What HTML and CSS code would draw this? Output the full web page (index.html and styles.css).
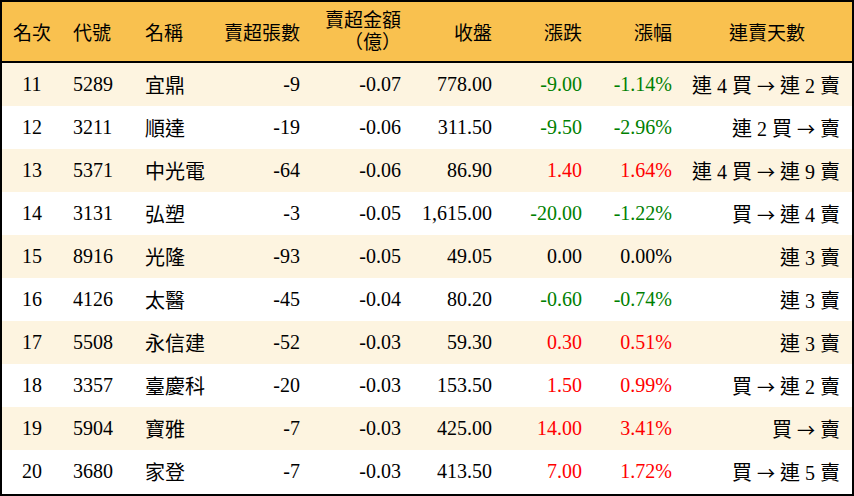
FILE: index.html
```html
<!DOCTYPE html>
<html lang="zh-Hant">
<head>
<meta charset="utf-8">
<link rel="stylesheet" href="styles.css">
</head>
<body>
<div class="board">
  <div class="row head">
    <div class="c center">名次</div>
    <div class="c left">代號</div>
    <div class="c left">名稱</div>
    <div class="c right">賣超張數</div>
    <div class="c right two">賣超金額<br>（億）</div>
    <div class="c right">收盤</div>
    <div class="c right">漲跌</div>
    <div class="c right">漲幅</div>
    <div class="c center streak-h">連賣天數</div>
  </div>
  <div class="row odd">
    <div class="c center">11</div><div class="c left">5289</div><div class="c left">宜鼎</div>
    <div class="c right">-9</div><div class="c right">-0.07</div><div class="c right">778.00</div>
    <div class="c right dn">-9.00</div><div class="c right dn">-1.14%</div>
    <div class="c right streak">連 4 買 <span class="arr">→</span> 連 2 賣</div>
  </div>
  <div class="row">
    <div class="c center">12</div><div class="c left">3211</div><div class="c left">順達</div>
    <div class="c right">-19</div><div class="c right">-0.06</div><div class="c right">311.50</div>
    <div class="c right dn">-9.50</div><div class="c right dn">-2.96%</div>
    <div class="c right streak">連 2 買 <span class="arr">→</span> 賣</div>
  </div>
  <div class="row odd">
    <div class="c center">13</div><div class="c left">5371</div><div class="c left">中光電</div>
    <div class="c right">-64</div><div class="c right">-0.06</div><div class="c right">86.90</div>
    <div class="c right up">1.40</div><div class="c right up">1.64%</div>
    <div class="c right streak">連 4 買 <span class="arr">→</span> 連 9 賣</div>
  </div>
  <div class="row">
    <div class="c center">14</div><div class="c left">3131</div><div class="c left">弘塑</div>
    <div class="c right">-3</div><div class="c right">-0.05</div><div class="c right">1,615.00</div>
    <div class="c right dn">-20.00</div><div class="c right dn">-1.22%</div>
    <div class="c right streak">買 <span class="arr">→</span> 連 4 賣</div>
  </div>
  <div class="row odd">
    <div class="c center">15</div><div class="c left">8916</div><div class="c left">光隆</div>
    <div class="c right">-93</div><div class="c right">-0.05</div><div class="c right">49.05</div>
    <div class="c right">0.00</div><div class="c right">0.00%</div>
    <div class="c right streak">連 3 賣</div>
  </div>
  <div class="row">
    <div class="c center">16</div><div class="c left">4126</div><div class="c left">太醫</div>
    <div class="c right">-45</div><div class="c right">-0.04</div><div class="c right">80.20</div>
    <div class="c right dn">-0.60</div><div class="c right dn">-0.74%</div>
    <div class="c right streak">連 3 賣</div>
  </div>
  <div class="row odd">
    <div class="c center">17</div><div class="c left">5508</div><div class="c left">永信建</div>
    <div class="c right">-52</div><div class="c right">-0.03</div><div class="c right">59.30</div>
    <div class="c right up">0.30</div><div class="c right up">0.51%</div>
    <div class="c right streak">連 3 賣</div>
  </div>
  <div class="row">
    <div class="c center">18</div><div class="c left">3357</div><div class="c left">臺慶科</div>
    <div class="c right">-20</div><div class="c right">-0.03</div><div class="c right">153.50</div>
    <div class="c right up">1.50</div><div class="c right up">0.99%</div>
    <div class="c right streak">買 <span class="arr">→</span> 連 2 賣</div>
  </div>
  <div class="row odd">
    <div class="c center">19</div><div class="c left">5904</div><div class="c left">寶雅</div>
    <div class="c right">-7</div><div class="c right">-0.03</div><div class="c right">425.00</div>
    <div class="c right up">14.00</div><div class="c right up">3.41%</div>
    <div class="c right streak">買 <span class="arr">→</span> 賣</div>
  </div>
  <div class="row">
    <div class="c center">20</div><div class="c left">3680</div><div class="c left">家登</div>
    <div class="c right">-7</div><div class="c right">-0.03</div><div class="c right">413.50</div>
    <div class="c right up">7.00</div><div class="c right up">1.72%</div>
    <div class="c right streak">買 <span class="arr">→</span> 連 5 賣</div>
  </div>
</div>
</body>
</html>
```
FILE: styles.css
```css
html, body {
  margin: 0;
  padding: 0;
  background: #fff;
}
body {
  font-family: "Liberation Serif", "Noto Sans CJK TC", serif;
  font-size: 20px;
  color: #000;
}
.board {
  width: 854px;
  height: 496px;
  box-sizing: border-box;
  border: 2px solid #000;
  background: #fff;
  overflow: hidden;
}
.row {
  display: grid;
  grid-template-columns: 60px 72px 76px 100px 101px 91px 90px 90px 170px;
  height: 43px;
  align-items: center;
  background: #fff;
}
.row.odd {
  background: #fdf4e0;
}
.row.head {
  height: 59px;
  background: #f9c14f;
  border-bottom: 2px solid #000;
  font-size: 19px;
}
.c {
  white-space: nowrap;
}
.center { text-align: center; }
.left { text-align: left; padding-left: 11px; }
.right { text-align: right; padding-right: 10px; }
.two { line-height: 22px; }
.streak { padding-right: 12px; }
.streak-h { text-align: center; }
.arr {
  font-family: "Noto Sans CJK TC", sans-serif;
  font-size: 18px;
}
.up { color: #ff0000; }
.dn { color: #008000; }
```
